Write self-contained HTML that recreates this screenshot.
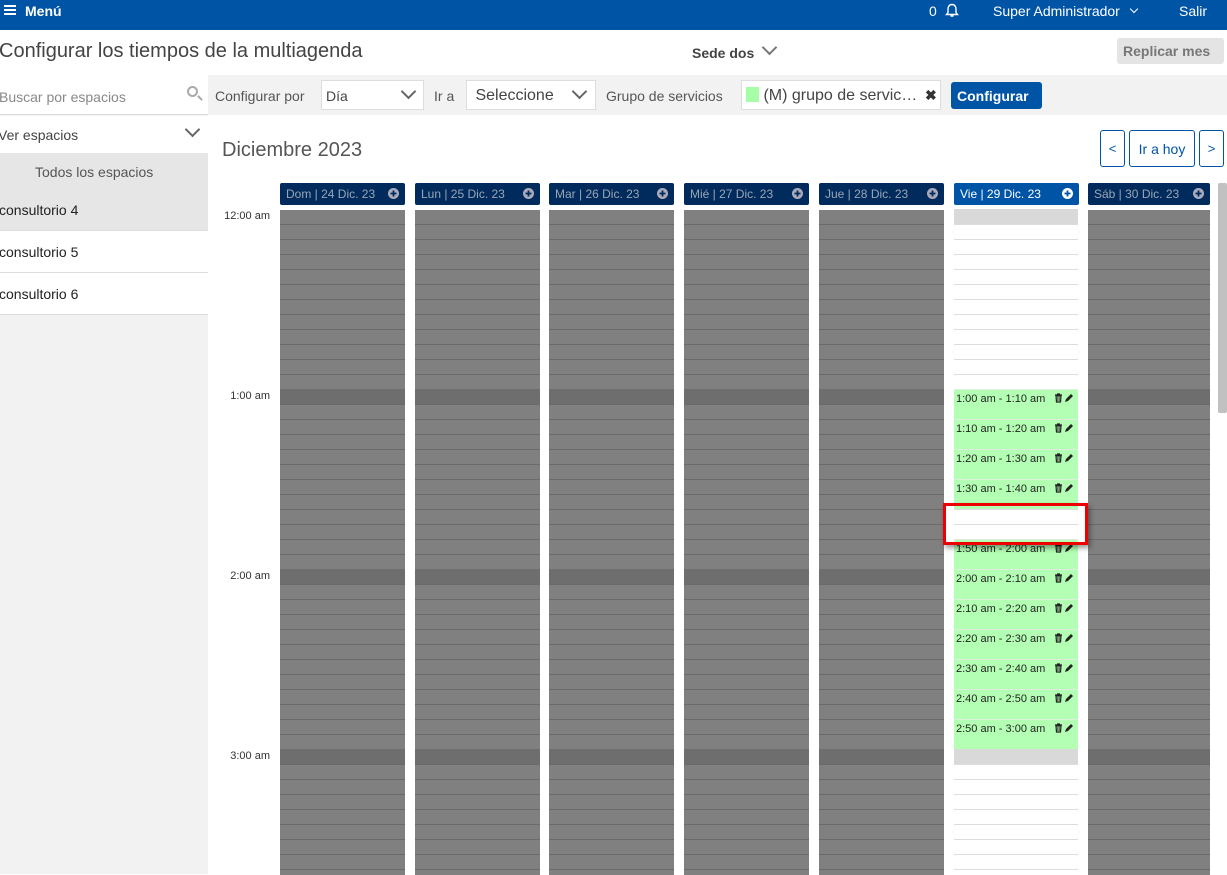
<!DOCTYPE html>
<html><head><meta charset="utf-8"><style>
*{box-sizing:border-box;margin:0;padding:0}
body{width:1227px;height:874px;overflow:hidden;font-family:"Liberation Sans",sans-serif;background:#fff;position:relative;color:#333}
.abs{position:absolute}
.top{left:0;top:0;width:1227px;height:30px;background:#0054a6;color:#fff;font-size:14px}
.side{left:0;top:75px;width:208px;height:799px;background:#f2f2f2}
.bar{left:208px;top:75px;width:1019px;height:40px;background:#f2f2f2}
.sel{background:#fff;border:1px solid #ddd;height:30px;top:80px;font-size:16px;color:#444;padding:6px 4px}
.chev{position:absolute;width:11px;height:11px;border-right:2px solid #666;border-bottom:2px solid #666;transform:rotate(45deg)}
.hdr{top:183px;height:22px;width:125px;background:#002b5c;color:#9aa6b6;font-size:12px;padding:4px 6px;border-radius:2px}
.hdr svg{position:absolute;right:6px;top:5px}
.col{top:210px;width:125px;height:665px;background:repeating-linear-gradient(#808080 0,#808080 14px,#6a6a6a 14px,#6a6a6a 15px)}
.dk{position:absolute;left:0;width:100%;height:15px;background:#6e6e6e}
.t{font-size:11px;color:#333;right:957px;text-align:right}
.g{left:954px;width:124px;height:30px;background:#b3ffb3;border-top:1px solid #ddeedd;font-size:11px;color:#222;padding:3px 2px}
.g svg{position:absolute;right:4px;top:3px}
</style></head><body>
<svg width="0" height="0" style="position:absolute"><defs>
<g id="pl"><circle cx="5.5" cy="5.5" r="5.5"/><path d="M5.5 2.5v6M2.5 5.5h6" stroke="currentColor" stroke-width="1.8"/></g>
<g id="ic"><path d="M1 2h7M3 1h3M2 3h5l-.5 6h-4z" fill="none" stroke="#222" stroke-width="1.2"/><path d="M3.8 4v4M5.2 4v4" stroke="#222" stroke-width=".8"/><path d="M11 9l1-3 5-5 2 2-5 5z" fill="#222"/></g>
</defs></svg>
<div class="abs top">
<div class="abs" style="left:4px;top:5px;width:12px;height:2px;background:#fff;box-shadow:0 4px 0 #fff,0 8px 0 #fff"></div>
<span class="abs" style="left:25px;top:3px;font-weight:bold">Menú</span>
<span class="abs" style="left:929px;top:3px">0</span>
<svg class="abs" style="left:945px;top:3px" width="14" height="15" viewBox="0 0 14 15"><path d="M7 1.5c-2.5 0-4 2-4 4.5v3.5L1.5 11.5h11L11 9.5V6c0-2.5-1.5-4.5-4-4.5zM5.5 13h3" fill="none" stroke="#fff" stroke-width="1.4"/></svg>
<span class="abs" style="left:993px;top:3px">Super Administrador</span>
<div class="abs" style="left:1131px;top:6px;width:6px;height:6px;border-right:1.5px solid #fff;border-bottom:1.5px solid #fff;transform:rotate(45deg)"></div>
<span class="abs" style="left:1179px;top:3px">Salir</span>
</div>
<div class="abs" style="left:-1px;top:40px;font-size:20px;color:#444">Configurar los tiempos de la multiagenda</div>
<div class="abs" style="left:692px;top:45px;font-size:14px;font-weight:bold;color:#444">Sede dos</div>
<div class="chev" style="left:764px;top:42px;border-color:#777"></div>
<div class="abs" style="left:1117px;top:38px;width:107px;height:26px;background:#e4e4e4;border-radius:3px;font-size:14px;font-weight:bold;color:#777;padding:5px 6px">Replicar mes</div>
<div class="abs side"></div>
<div class="abs" style="left:0;top:75px;width:208px;height:40px;background:#fff;border-bottom:1px solid #ddd"></div>
<div class="abs" style="left:-1px;top:89px;font-size:14px;color:#888">Buscar por espacios</div>
<div class="abs" style="left:187px;top:86px;width:11px;height:11px;border:2px solid #aaa;border-radius:50%"></div>
<div class="abs" style="left:197px;top:97px;width:6px;height:2px;background:#aaa;transform:rotate(45deg)"></div>
<div class="abs" style="left:0;top:116px;width:208px;height:37px;background:#fff"></div>
<div class="abs" style="left:-2px;top:127px;font-size:14px;color:#444">Ver espacios</div>
<div class="chev" style="left:187px;top:124px"></div>
<div class="abs" style="left:0;top:153px;width:208px;height:77px;background:#e6e6e6"></div>
<div class="abs" style="left:35px;top:164px;font-size:14px;color:#555">Todos los espacios</div>
<div class="abs" style="left:-1px;top:202px;font-size:14px;color:#222">consultorio 4</div>
<div class="abs" style="left:0;top:230px;width:208px;height:85px;background:#fff;border-top:1px solid #ddd;border-bottom:1px solid #ddd"></div>
<div class="abs" style="left:0;top:272px;width:208px;height:1px;background:#ddd"></div>
<div class="abs" style="left:-1px;top:244px;font-size:14px;color:#222">consultorio 5</div>
<div class="abs" style="left:-1px;top:286px;font-size:14px;color:#222">consultorio 6</div>
<div class="abs bar"></div>
<div class="abs" style="left:215px;top:88px;font-size:14px;color:#555">Configurar por</div>
<div class="abs sel" style="left:321px;width:103px;font-size:14px;padding-top:7px">Día</div>
<div class="chev" style="left:403px;top:86px"></div>
<div class="abs" style="left:434px;top:88px;font-size:14px;color:#555">Ir a</div>
<div class="abs sel" style="left:466px;width:130px">&nbsp;Seleccione</div>
<div class="chev" style="left:574px;top:86px"></div>
<div class="abs" style="left:606px;top:88px;font-size:14px;color:#555">Grupo de servicios</div>
<div class="abs sel" style="left:741px;width:200px;padding:6px 4px"><span style="display:inline-block;width:13px;height:15px;background:#a6ffa6;vertical-align:-2px"></span> (M) grupo de servic…</div>
<div class="abs" style="left:925px;top:87px;font-size:14px;color:#333;font-weight:bold">✖</div>
<div class="abs" style="left:951px;top:82px;width:91px;height:27px;background:#0054a6;border-radius:3px;color:#fff;font-size:14px;font-weight:bold;padding:6px 6px">Configurar</div>
<div class="abs" style="left:222px;top:139px;font-size:20px;color:#555">Diciembre 2023</div>
<div class="abs" style="left:1100px;top:130px;width:25px;height:37px;border:1px solid #0054a6;border-radius:3px;color:#0054a6;font-size:13px;text-align:center;padding-top:10px">&lt;</div>
<div class="abs" style="left:1129px;top:130px;width:66px;height:37px;border:1px solid #0054a6;border-radius:3px;color:#0054a6;font-size:14px;text-align:center;padding-top:10px">Ir a hoy</div>
<div class="abs" style="left:1199px;top:130px;width:25px;height:37px;border:1px solid #0054a6;border-radius:3px;color:#0054a6;font-size:13px;text-align:center;padding-top:10px">&gt;</div>
<div class="abs" style="left:1218px;top:183px;width:9px;height:230px;background:#c1c1c1;border-radius:2px"></div>

<div class="abs hdr" style="left:280px">Dom | 24 Dic. 23<svg width="11" height="11" style="color:#002b5c;fill:#aab"><use href="#pl"/></svg></div>
<div class="abs hdr" style="left:415px">Lun | 25 Dic. 23<svg width="11" height="11" style="color:#002b5c;fill:#aab"><use href="#pl"/></svg></div>
<div class="abs hdr" style="left:549px">Mar | 26 Dic. 23<svg width="11" height="11" style="color:#002b5c;fill:#aab"><use href="#pl"/></svg></div>
<div class="abs hdr" style="left:684px">Mié | 27 Dic. 23<svg width="11" height="11" style="color:#002b5c;fill:#aab"><use href="#pl"/></svg></div>
<div class="abs hdr" style="left:819px">Jue | 28 Dic. 23<svg width="11" height="11" style="color:#002b5c;fill:#aab"><use href="#pl"/></svg></div>
<div class="abs hdr" style="left:954px;background:#0054a6;color:#fff">Vie | 29 Dic. 23<svg width="11" height="11" style="color:#0054a6;fill:#fff"><use href="#pl"/></svg></div>
<div class="abs hdr" style="left:1088px;width:122px">Sáb | 30 Dic. 23<svg width="11" height="11" style="color:#002b5c;fill:#aab"><use href="#pl"/></svg></div>

<div class="abs t" style="top:210px">12:00 am</div>
<div class="abs t" style="top:390px">1:00 am</div>
<div class="abs t" style="top:570px">2:00 am</div>
<div class="abs t" style="top:750px">3:00 am</div>

<div class="abs col" style="left:280px"><div class="dk" style="top:179px"></div><div class="dk" style="top:359px"></div><div class="dk" style="top:539px"></div></div>
<div class="abs col" style="left:415px"><div class="dk" style="top:179px"></div><div class="dk" style="top:359px"></div><div class="dk" style="top:539px"></div></div>
<div class="abs col" style="left:549px"><div class="dk" style="top:179px"></div><div class="dk" style="top:359px"></div><div class="dk" style="top:539px"></div></div>
<div class="abs col" style="left:684px"><div class="dk" style="top:179px"></div><div class="dk" style="top:359px"></div><div class="dk" style="top:539px"></div></div>
<div class="abs col" style="left:819px"><div class="dk" style="top:179px"></div><div class="dk" style="top:359px"></div><div class="dk" style="top:539px"></div></div>
<div class="abs col" style="left:1088px;width:122px"><div class="dk" style="top:179px"></div><div class="dk" style="top:359px"></div><div class="dk" style="top:539px"></div></div>
<div class="abs" style="left:954px;top:210px;width:124px;height:665px;background:repeating-linear-gradient(#fff 0,#fff 14px,#ddd 14px,#ddd 15px)">
<div class="dk" style="top:-1px;background:#d9d9d9"></div><div class="dk" style="top:539px;background:#d9d9d9"></div></div>

<div class="abs g" style="top:389px">1:00 am - 1:10 am<svg width="20" height="10"><use href="#ic"/></svg></div>
<div class="abs g" style="top:419px">1:10 am - 1:20 am<svg width="20" height="10"><use href="#ic"/></svg></div>
<div class="abs g" style="top:449px">1:20 am - 1:30 am<svg width="20" height="10"><use href="#ic"/></svg></div>
<div class="abs g" style="top:479px">1:30 am - 1:40 am<svg width="20" height="10"><use href="#ic"/></svg></div>
<div class="abs g" style="top:539px">1:50 am - 2:00 am<svg width="20" height="10"><use href="#ic"/></svg></div>
<div class="abs g" style="top:569px">2:00 am - 2:10 am<svg width="20" height="10"><use href="#ic"/></svg></div>
<div class="abs g" style="top:599px">2:10 am - 2:20 am<svg width="20" height="10"><use href="#ic"/></svg></div>
<div class="abs g" style="top:629px">2:20 am - 2:30 am<svg width="20" height="10"><use href="#ic"/></svg></div>
<div class="abs g" style="top:659px">2:30 am - 2:40 am<svg width="20" height="10"><use href="#ic"/></svg></div>
<div class="abs g" style="top:689px">2:40 am - 2:50 am<svg width="20" height="10"><use href="#ic"/></svg></div>
<div class="abs g" style="top:719px">2:50 am - 3:00 am<svg width="20" height="10"><use href="#ic"/></svg></div>
<div class="abs" style="left:943px;top:503px;width:145px;height:42px;border:3px solid #e00;box-shadow:2px 3px 5px rgba(0,0,0,.4)"></div>
</body></html>
